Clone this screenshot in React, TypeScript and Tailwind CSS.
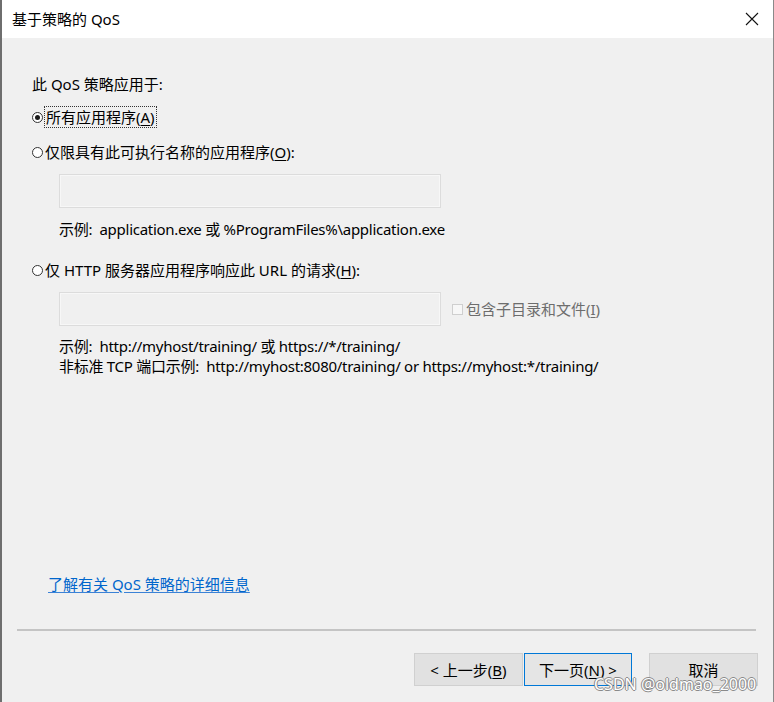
import React from "react";

const font = { fontFamily: '"Noto Sans", "Noto Sans CJK SC", sans-serif' };

function Radio({ checked }: { checked?: boolean }) {
  return (
    <span className="w-[11px] h-[11px] rounded-full border border-[#333333] bg-white flex items-center justify-center shrink-0">
      {checked && <span className="w-[5px] h-[5px] rounded-full bg-[#1a1a1a]" />}
    </span>
  );
}

export default function App() {
  return (
    <div
      className="w-[774px] h-[702px] relative flex flex-col bg-[#f0f0f0] border-l-2 border-l-[#6e6e6e] border-r border-r-[#8a8a8a] text-[15px] text-black overflow-hidden"
      style={font}
    >
      {/* title bar */}
      <div className="h-[38px] bg-white flex items-center justify-between pl-[10px] pr-[12px] shrink-0">
        <span className="leading-[20px]">基于策略的 QoS</span>
        <svg width="14" height="14" viewBox="0 0 14 14" className="mr-[2px]">
          <path d="M1 1 L13 13 M13 1 L1 13" stroke="#111" strokeWidth="1.1" />
        </svg>
      </div>

      <div className="flex flex-col pl-[30px]">
        <div className="mt-[36px] h-[20px] leading-[20px]">此 QoS 策略应用于:</div>

        <div className="mt-[12px] h-[22px] flex items-center">
          <Radio checked />
          <span className="ml-[1px] h-[22px] px-[1px] leading-[20px] border border-dotted border-[#333]">所有应用程序(<span className="underline underline-offset-2">A</span>)</span>
        </div>

        <div className="mt-[14px] h-[20px] flex items-center">
          <Radio />
          <span className="ml-[2px] leading-[20px]">仅限具有此可执行名称的应用程序(<span className="underline underline-offset-2">O</span>):</span>
        </div>

        <div className="ml-[27px] mt-[12px] w-[382px] h-[34px] border border-[#dcdcdc] bg-[#f0f0f0] shadow-[inset_0_0_0_1px_#f7f7f7]" />

        <div className="ml-[27px] mt-[11px] h-[20px] leading-[20px] tracking-[-0.27px]">示例:&nbsp; application.exe 或 %ProgramFiles%\application.exe</div>

        <div className="mt-[21px] h-[20px] flex items-center">
          <Radio />
          <span className="ml-[2px] leading-[20px]">仅 HTTP 服务器应用程序响应此 URL 的请求(<span className="underline underline-offset-2">H</span>):</span>
        </div>

        <div className="ml-[27px] mt-[12px] flex items-center">
          <div className="w-[382px] h-[34px] border border-[#dcdcdc] bg-[#f0f0f0] shadow-[inset_0_0_0_1px_#f7f7f7]" />
          <span className="ml-[11px] w-[11px] h-[11px] border border-[#cfcfcf] bg-[#f7f7f7]" />
          <span className="ml-[3px] leading-[20px] text-[#6d6d6d]">包含子目录和文件(<span className="underline underline-offset-2">I</span>)</span>
        </div>

        <div className="ml-[27px] mt-[10px] h-[20px] leading-[20px] tracking-[-0.27px]">示例:&nbsp; http://myhost/training/ 或 https://*/training/</div>
        <div className="ml-[27px] h-[20px] leading-[20px] tracking-[-0.27px]">非标准 TCP 端口示例:&nbsp; http://myhost:8080/training/ or https://myhost:*/training/</div>

        <div className="ml-[16px] mt-[198px] h-[20px] leading-[20px] text-[#0066cc] underline underline-offset-2 decoration-[#3b82d6]">了解有关 QoS 策略的详细信息</div>
      </div>

      <div className="mt-[35px] ml-[15px] w-[739px] h-[2px] bg-[#c4c4c4]" />

      <div className="mt-[22px] flex justify-end pr-[15px]">
        <button className="w-[109px] h-[33px] border border-[#d0d0d0] bg-[#e1e1e1] leading-[20px]">&lt; 上一步(<span className="underline underline-offset-2">B</span>)</button>
        <button className="ml-[1px] w-[108px] h-[33px] border border-[#0078d7] bg-[#e5e5e5] leading-[20px]">下一页(<span className="underline underline-offset-2">N</span>) &gt;</button>
        <button className="ml-[17px] w-[109px] h-[33px] border border-[#d0d0d0] bg-[#e1e1e1] leading-[20px]">取消</button>
      </div>

      <div className="absolute left-[592px] top-[673px] text-[16px] leading-[22px] text-white [text-shadow:1px_0_0_#8a8a8a,-1px_0_0_#8a8a8a,0_1px_0_#8a8a8a,0_-1px_0_#8a8a8a]">CSDN @oldmao_2000</div>
    </div>
  );
}
